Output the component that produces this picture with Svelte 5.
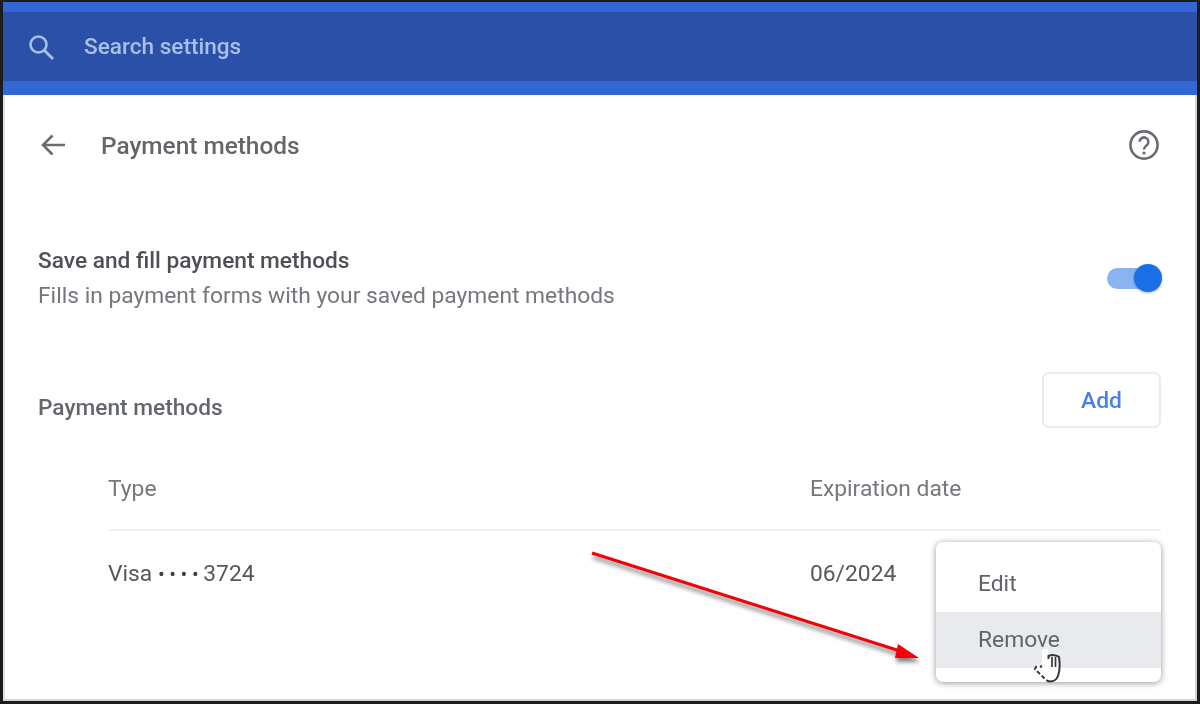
<script>
  const rows = [{ type: 'Visa', last: '3724', expires: '06/2024' }];
</script>

<div class="shot">
  <header class="search-bar">
    <div class="search-inner">
      <svg class="search-icon" viewBox="0 0 28 28" width="28" height="28" aria-hidden="true">
        <circle cx="11.5" cy="11.5" r="8" fill="none" stroke="currentColor" stroke-width="2.6" />
        <path d="M17.5 17.5 L26 26" fill="none" stroke="currentColor" stroke-width="2.8" />
      </svg>
      <span>Search settings</span>
    </div>
  </header>

  <main class="page">
    <div class="title-row">
      <svg class="back" viewBox="0 0 26 24" width="26" height="24" aria-hidden="true">
        <path d="M25 12 H3 M12.5 2.5 L3 12 L12.5 21.5" fill="none" stroke="currentColor" stroke-width="2.6" />
      </svg>
      <h1>Payment methods</h1>
      <svg class="help" viewBox="0 0 32 32" width="32" height="32" aria-hidden="true">
        <circle cx="16" cy="16" r="13.6" fill="none" stroke="currentColor" stroke-width="2.6" />
        <path d="M11.6 12.8 a4.4 4.4 0 1 1 7.2 3.4 c-1.7 1.4 -2.8 2 -2.8 4.4" fill="none" stroke="currentColor" stroke-width="2.5" />
        <circle cx="16" cy="24" r="1.6" fill="currentColor" />
      </svg>
    </div>

    <section class="setting">
      <div>
        <div class="setting-title">Save and fill payment methods</div>
        <div class="setting-sub">Fills in payment forms with your saved payment methods</div>
      </div>
      <div class="toggle"><span class="knob"></span></div>
    </section>

    <section class="methods-head">
      <h2>Payment methods</h2>
      <button class="add">Add</button>
    </section>

    <div class="table">
      <div class="thead">
        <span class="col-type">Type</span>
        <span>Expiration date</span>
      </div>
      {#each rows as row}
        <div class="trow">
          <span class="col-type">{row.type} <span class="dots">••••</span>{row.last}</span>
          <span>{row.expires}</span>
          <div class="menu">
            <div class="item">Edit</div>
            <div class="item active">Remove</div>
            <svg class="cursor" viewBox="0 0 30 36" width="30" height="36" aria-hidden="true">
              <path d="M11 1 H17 V9 H28 C29 16 28.5 24 27 28 C24 34 18 35 15 32 L4 21 L6 17 L11 20 Z" fill="#fff" />
              <path d="M17.5 11 V8 C21 6.5 26 7 28 9 C29 16 28.5 24 27 28 C25.5 32 22 33.5 19 33.5" fill="none" stroke="#33363b" stroke-width="2" />
              <path d="M21 9 V19 M24.5 9 V19" fill="none" stroke="#33363b" stroke-width="1.7" />
              <path d="M19 33.5 C16 33 15 32 13 30 L4 21 L6 17" fill="none" stroke="#33363b" stroke-width="2" stroke-dasharray="4 2.4" />
              <path d="M11 18 L9 19" fill="none" stroke="#33363b" stroke-width="2" />
            </svg>
          </div>
        </div>
      {/each}
    </div>
  </main>

  <svg class="arrow" viewBox="0 0 350 130" width="350" height="130" aria-hidden="true">
    <path d="M4 4 L312 102" stroke="#f4000a" stroke-width="3" fill="none" />
    <path d="M310 95 L331 109 L307 109 Z" fill="#f4000a" />
  </svg>
</div>

<style>
  :global(body) {
    margin: 0;
    background: #fff;
  }

  .shot {
    position: relative;
    box-sizing: border-box;
    width: 1200px;
    height: 704px;
    overflow: hidden;
    border: solid #1c1c1c;
    border-width: 2px 3px 3px 3px;
    background: #fff;
    box-shadow: inset -2px -2px #d4d4d4, inset 2px 0 #e2e2e2;
    font-family: Roboto, "Liberation Sans", sans-serif;
    color: #5f6368;
    filter: blur(0.7px);
  }

  .search-bar {
    box-sizing: border-box;
    height: 93px;
    padding: 10px 0 14px;
    background: #3367d6;
  }

  .search-inner {
    display: flex;
    align-items: center;
    gap: 29px;
    height: 69px;
    padding-left: 24px;
    background: #2a50a8;
    color: #a9bfe9;
    font-size: 22.6px;
    font-weight: 500;
  }

  .search-icon {
    flex: none;
  }

  .page {
    padding: 0 35px;
  }

  .title-row {
    display: flex;
    align-items: center;
    height: 100px;
  }

  .back {
    flex: none;
    margin-right: 35px;
    margin-left: 2px;
    color: #686c71;
  }

  h1 {
    flex: 1;
    margin: 0;
    font-size: 24.4px;
    font-weight: 500;
    color: #63676c;
  }

  .help {
    flex: none;
    margin-right: 2px;
    color: #686c71;
  }

  .setting {
    display: flex;
    align-items: center;
    justify-content: space-between;
    margin-top: 49px;
  }

  .setting-title {
    font-size: 22.7px;
    font-weight: 500;
    line-height: 34px;
    color: #4d5156;
  }

  .setting-sub {
    font-size: 22.8px;
    line-height: 36px;
    color: #74787d;
  }

  .toggle {
    position: relative;
    width: 48px;
    height: 21px;
    margin-right: 7px;
    margin-bottom: 2px;
    border-radius: 11px;
    background: #8ab4f1;
  }

  .knob {
    position: absolute;
    top: -4px;
    right: -7px;
    width: 28px;
    height: 28px;
    border-radius: 50%;
    background: #1a6fe6;
    box-shadow: 0 1px 3px rgba(0, 0, 0, 0.3);
  }

  .methods-head {
    display: flex;
    align-items: center;
    justify-content: space-between;
    margin-top: 58px;
    margin-right: 1px;
    height: 56px;
  }

  h2 {
    margin: 14px 0 0;
    font-size: 22.7px;
    font-weight: 500;
    color: #63676c;
  }

  .add {
    box-sizing: border-box;
    width: 119px;
    height: 56px;
    border: 2px solid #e9ebee;
    border-radius: 7px;
    background: #fff;
    color: #4a7ee8;
    font: 500 22.8px Roboto, "Liberation Sans", sans-serif;
  }

  .table {
    margin-left: 70px;
    margin-right: 1px;
  }

  .thead,
  .trow {
    display: flex;
    align-items: center;
    font-size: 22.8px;
  }

  .thead {
    height: 82px;
    margin-top: 19px;
    border-bottom: 2px solid #f0f1f2;
    color: #74787d;
  }

  .trow {
    position: relative;
    height: 85px;
    color: #55595e;
  }

  .col-type {
    width: 702px;
  }

  .dots {
    font-size: 20px;
    letter-spacing: 4.6px;
    color: #3c4043;
  }

  .menu {
    position: absolute;
    top: 11px;
    right: 0;
    box-sizing: border-box;
    width: 225px;
    height: 140px;
    padding-top: 14px;
    border-radius: 7px;
    background: #fff;
    box-shadow: 0 1px 6px rgba(0, 0, 0, 0.42);
  }

  .item {
    display: flex;
    align-items: center;
    box-sizing: border-box;
    height: 56px;
    padding: 0 0 2px 42px;
    color: #606469;
  }

  .active {
    background: #e8eaed;
  }

  .cursor {
    position: absolute;
    left: 95px;
    top: 106px;
  }

  .arrow {
    position: absolute;
    left: 585px;
    top: 547px;
    filter: drop-shadow(1px 4px 2px rgba(0, 0, 0, 0.5));
  }
</style>
